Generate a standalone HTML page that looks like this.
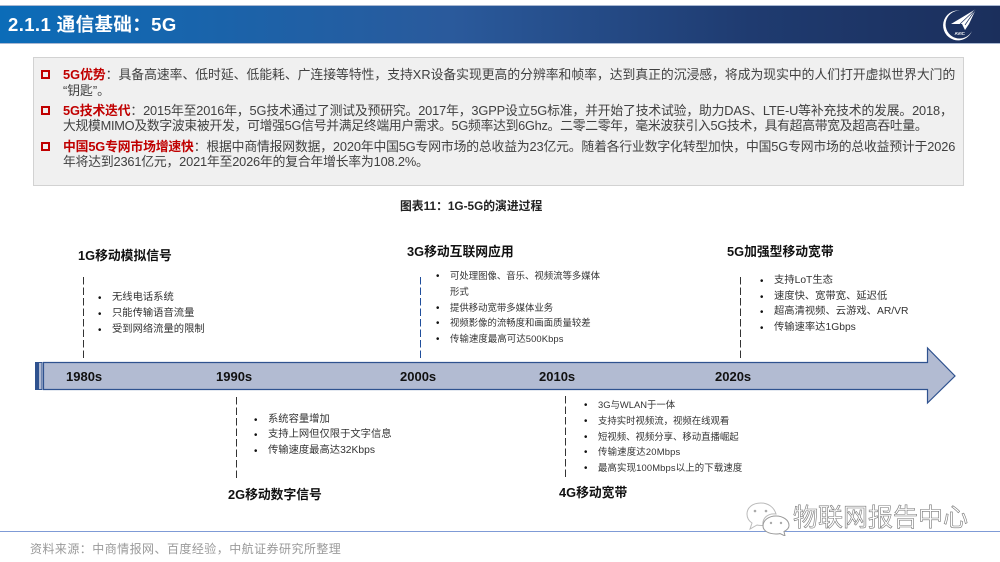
<!DOCTYPE html>
<html><head><meta charset="utf-8">
<style>
html,body{margin:0;padding:0;background:#fff}
#p{position:relative;width:1000px;height:562px;overflow:hidden;background:#fff;font-family:"Liberation Sans","Noto Sans CJK SC",sans-serif;filter:blur(.3px)}
.t{position:absolute;white-space:nowrap;line-height:1.2}
.b{font-size:12.8px;color:#404040}
.b b{color:#c00000;font-weight:700}
.h{font-size:12.8px;font-weight:700;color:#111}
.l{font-size:10.3px;color:#333}
.s{font-size:9.4px;color:#333}
.d{position:absolute;width:6px;font-size:9.8px;color:#111}
.y{font-size:13px;font-weight:700;color:#111}
.sq{position:absolute;left:41px;width:5px;height:5px;border:2px solid #c00000}
.v{position:absolute;width:1px;background:repeating-linear-gradient(180deg,#333 0 7.500px,transparent 7.500px 10.500px)}
</style></head><body><div id="p">
<div style="position:absolute;left:0;top:5px;width:1000px;height:39px;background:linear-gradient(90deg,#0b6cb8 0%,#2a5a9c 45%,#1f3b70 75%,#1b2f5c 100%);border-top:1px solid #a9b8d2;border-bottom:1px solid #a9b8d2;box-sizing:border-box"></div>
<div class="t" style="left:8px;top:14px;font-size:18.5px;font-weight:700;color:#fff;letter-spacing:.4px">2.1.1 通信基础：5G</div>
<svg style="position:absolute;left:940px;top:0" width="45" height="44" viewBox="0 0 45 44">
<path d="M20 10.500A15 15 0 1 0 32 31A14 14 0 1 1 20 10.500Z" fill="#fff"/>
<path d="M36 9L11 24L22 24L25 30L29 24Z" fill="#fff"/>
<path d="M36 9L20 24M36 9L25 25" stroke="#1b2f5c" stroke-width=".7" fill="none"/>
<text x="14.500" y="35" font-size="4.500" font-weight="700" fill="#fff" font-family="Liberation Sans">AVIC</text>
</svg>

<div style="position:absolute;left:33px;top:57px;width:931px;height:129px;box-sizing:border-box;background:#f0f0f0;border:1.500px solid #d2d2d2"></div>
<div class="sq" style="top:70px"></div>
<div class="sq" style="top:106px"></div>
<div class="sq" style="top:142px"></div>
<div class="t b" style="left:63px;top:67px"><b>5G优势</b>：具备高速率、低时延、低能耗、广连接等特性，支持XR设备实现更高的分辨率和帧率，达到真正的沉浸感，将成为现实中的人们打开虚拟世界大门的</div>
<div class="t b" style="left:63px;top:83px">“钥匙”。</div>
<div class="t b" style="left:63px;top:103px;letter-spacing:-.14px"><b>5G技术迭代</b>：2015年至2016年，5G技术通过了测试及预研究。2017年，3GPP设立5G标准，并开始了技术试验，助力DAS、LTE-U等补充技术的发展。2018，</div>
<div class="t b" style="left:63px;top:118px;letter-spacing:-.27px">大规模MIMO及数字波束被开发，可增强5G信号并满足终端用户需求。5G频率达到6Ghz。二零二零年，毫米波获引入5G技术，具有超高带宽及超高吞吐量。</div>
<div class="t b" style="left:63px;top:139px;letter-spacing:-.14px"><b>中国5G专网市场增速快</b>：根据中商情报网数据，2020年中国5G专网市场的总收益为23亿元。随着各行业数字化转型加快，中国5G专网市场的总收益预计于2026</div>
<div class="t b" style="left:63px;top:154px;letter-spacing:-.17px">年将达到2361亿元，2021年至2026年的复合年增长率为108.2%。</div>

<div class="t" style="left:400px;top:199px;font-size:11.8px;font-weight:700;color:#222">图表11：1G-5G的演进过程</div>

<svg style="position:absolute;left:0;top:340px" width="1000" height="70">
<path d="M43.500 22.500H927.500V8L955 36L927.500 63V49.500H43.500Z" fill="#b2bbd2" stroke="#2f528f" stroke-width="1.200"/>
<rect x="35" y="22" width="3" height="28" fill="#2f528f"/>
<rect x="38.500" y="22.500" width="3.500" height="27" fill="#b2bbd2" stroke="#2f528f"/>
</svg>

<div class="v" style="left:83px;top:277px;height:81px"></div>
<div class="v" style="left:420px;top:277px;height:81px;background:repeating-linear-gradient(180deg,#1f4e9c 0 7.500px,transparent 7.500px 10.500px)"></div>
<div class="v" style="left:740px;top:277px;height:81px"></div>
<div class="v" style="left:236px;top:397px;height:82px"></div>
<div class="v" style="left:565px;top:396px;height:81px"></div>

<div class="t y" style="left:66px;top:369px">1980s</div>
<div class="t y" style="left:216px;top:369px">1990s</div>
<div class="t y" style="left:400px;top:369px">2000s</div>
<div class="t y" style="left:539px;top:369px">2010s</div>
<div class="t y" style="left:715px;top:369px">2020s</div>

<div class="t h" style="left:78px;top:248px">1G移动模拟信号</div>
<div class="t h" style="left:407px;top:244px">3G移动互联网应用</div>
<div class="t h" style="left:727px;top:244px">5G加强型移动宽带</div>
<div class="t h" style="left:228px;top:487px">2G移动数字信号</div>
<div class="t h" style="left:559px;top:485px">4G移动宽带</div>

<div class="t d" style="left:98px;top:293px">•</div><div class="t l" style="left:112px;top:292px">无线电话系统</div>
<div class="t d" style="left:98px;top:309px">•</div><div class="t l" style="left:112px;top:308px">只能传输语音流量</div>
<div class="t d" style="left:98px;top:325px">•</div><div class="t l" style="left:112px;top:324px">受到网络流量的限制</div>

<div class="t d" style="left:436px;top:271px">•</div><div class="t s" style="left:450px;top:270px">可处理图像、音乐、视频流等多媒体</div>
<div class="t s" style="left:450px;top:286px">形式</div>
<div class="t d" style="left:436px;top:303px">•</div><div class="t s" style="left:450px;top:302px">提供移动宽带多媒体业务</div>
<div class="t d" style="left:436px;top:318px">•</div><div class="t s" style="left:450px;top:317px">视频影像的流畅度和画面质量较差</div>
<div class="t d" style="left:436px;top:334px">•</div><div class="t s" style="left:450px;top:333px;letter-spacing:.1px">传输速度最高可达500Kbps</div>

<div class="t d" style="left:760px;top:276px">•</div><div class="t l" style="left:774px;top:275px">支持LoT生态</div>
<div class="t d" style="left:760px;top:292px">•</div><div class="t l" style="left:774px;top:291px">速度快、宽带宽、延迟低</div>
<div class="t d" style="left:760px;top:307px">•</div><div class="t l" style="left:774px;top:306px">超高清视频、云游戏、AR/VR</div>
<div class="t d" style="left:760px;top:323px">•</div><div class="t l" style="left:774px;top:322px">传输速率达1Gbps</div>

<div class="t d" style="left:254px;top:415px">•</div><div class="t l" style="left:268px;top:414px">系统容量增加</div>
<div class="t d" style="left:254px;top:430px">•</div><div class="t l" style="left:268px;top:429px">支持上网但仅限于文字信息</div>
<div class="t d" style="left:254px;top:446px">•</div><div class="t l" style="left:268px;top:445px">传输速度最高达32Kbps</div>

<div class="t d" style="left:584px;top:400px">•</div><div class="t s" style="left:598px;top:399px">3G与WLAN于一体</div>
<div class="t d" style="left:584px;top:416px">•</div><div class="t s" style="left:598px;top:415px">支持实时视频流，视频在线观看</div>
<div class="t d" style="left:584px;top:432px">•</div><div class="t s" style="left:598px;top:431px">短视频、视频分享、移动直播崛起</div>
<div class="t d" style="left:584px;top:447px">•</div><div class="t s" style="left:598px;top:446px;letter-spacing:.2px">传输速度达20Mbps</div>
<div class="t d" style="left:584px;top:463px">•</div><div class="t s" style="left:598px;top:462px;letter-spacing:.15px">最高实现100Mbps以上的下载速度</div>

<div style="position:absolute;left:0;top:531px;width:1000px;height:1px;background:#7f9bd6"></div>
<svg style="position:absolute;left:745px;top:500px" width="45" height="36" viewBox="0 0 45 36">
<path d="M16 3C7 3 2 8 2 14C2 18 4 21 7 23L5 29L12 25C14 25.500 16 25.500 18 25.500C17 18 23 13 31 14C29 7 23 3 16 3Z" fill="#fff" stroke="#bbb" stroke-width="1"/>
<path d="M31 16C24 16 18 20 18 26C18 31 24 34 31 34C33 34 34 34 35 33.500L40 36L39 31.500C42 30 44 28.500 44 25.500C44 20 38 16 31 16Z" fill="#fff" stroke="#999" stroke-width="1"/>
<circle cx="10" cy="11" r="1.300" fill="#aaa"/><circle cx="21" cy="11" r="1.300" fill="#aaa"/>
<circle cx="26" cy="23" r="1.200" fill="#aaa"/><circle cx="36" cy="23" r="1.200" fill="#aaa"/>
</svg>
<div class="t" style="left:793px;top:501px;font-size:25px;color:#fff;-webkit-text-stroke:.6px #777;font-family:'Noto Sans CJK SC',sans-serif">物联网报告中心</div>

<div class="t" style="left:30px;top:542px;font-size:12px;color:#9a9a9a;letter-spacing:.45px">资料来源：中商情报网、百度经验，中航证券研究所整理</div>
</div></body></html>
